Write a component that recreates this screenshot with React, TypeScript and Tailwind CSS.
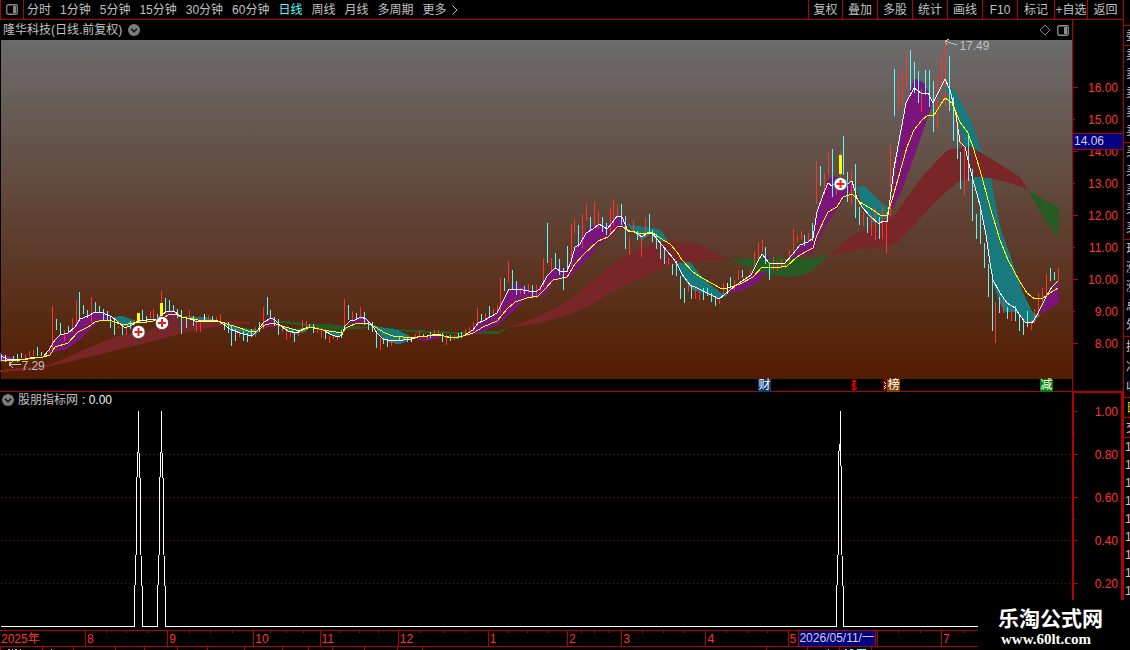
import React from "react";

type Candle = [number, number, number, "r" | "c" | "w"];

const periods = ["分时", "1分钟", "5分钟", "15分钟", "30分钟", "60分钟", "日线", "周线", "月线", "多周期", "更多"];

const tools: { label: string; width: string }[] = [
  { label: "复权", width: "w-[34px]" },
  { label: "叠加", width: "w-[35px]" },
  { label: "多股", width: "w-[35px]" },
  { label: "统计", width: "w-[35px]" },
  { label: "画线", width: "w-[35px]" },
  { label: "F10", width: "w-[35px]" },
  { label: "标记", width: "w-[37px]" },
  { label: "+自选", width: "w-[33px]" },
  { label: "返回", width: "w-[36px]" },
];

const prices = ["16.00", "15.00", "14.00", "13.00", "12.00", "11.00", "10.00", "9.00", "8.00"];
const levels = ["1.00", "0.80", "0.60", "0.40", "0.20"];

const months: { label: string; size: number; ticks: number }[] = [
  { label: "2025年", size: 86, ticks: 0 },
  { label: "8", size: 82, ticks: 3 },
  { label: "9", size: 86, ticks: 3 },
  { label: "10", size: 66, ticks: 3 },
  { label: "11", size: 78, ticks: 3 },
  { label: "12", size: 90, ticks: 3 },
  { label: "1", size: 79, ticks: 3 },
  { label: "2", size: 54, ticks: 3 },
  { label: "3", size: 84, ticks: 3 },
  { label: "4", size: 82, ticks: 3 },
  { label: "5", size: 89, ticks: 0 },
  { label: "", size: 64, ticks: 2 },
  { label: "7", size: 183, ticks: 7 },
];

const candles: Candle[] = [
  [1,354,360,"c"],[5,355,362,"w"],[9,357,364,"r"],[13,356,359,"c"],[17,354,362,"c"],[21,353,358,"c"],[25,354,359,"r"],[29,351,357,"r"],[33,350,356,"r"],[37,347,356,"c"],[41,352,356,"c"],[45,353,357,"r"],[49,348,352,"r"],
  [52,306,352,"r"],[56,319,330,"c"],[60,323,334,"c"],[64,330,341,"r"],[68,326,332,"c"],[72,318,332,"r"],[76,300,325,"r"],[79,292,320,"c"],[83,305,314,"c"],[87,310,318,"c"],[91,297,322,"r"],[95,302,313,"c"],[99,306,313,"c"],
  [103,309,320,"c"],[107,311,321,"c"],[110,316,328,"c"],[114,320,335,"c"],[118,326,328,"r"],[122,324,335,"c"],[126,326,335,"r"],[130,321,329,"c"],[134,320,325,"r"],[142,310,320,"c"],[146,316,322,"c"],[150,311,320,"r"],
  [153,309,319,"r"],[157,314,319,"c"],[161,291,303,"r"],[165,298,312,"c"],[169,300,311,"c"],[173,305,311,"c"],[177,309,318,"c"],[181,310,334,"c"],[186,318,328,"c"],[189,310,320,"r"],[193,316,326,"c"],[196,318,332,"r"],
  [200,320,332,"r"],[204,314,320,"w"],[208,315,321,"r"],[212,316,321,"c"],[216,317,322,"r"],[220,314,325,"r"],[224,322,330,"c"],[228,322,333,"c"],[231,326,346,"c"],[235,329,341,"c"],[239,329,337,"r"],[243,331,341,"c"],
  [247,333,342,"c"],[251,329,337,"c"],[255,327,337,"r"],[259,322,332,"c"],[263,307,329,"r"],[267,297,315,"c"],[270,310,319,"c"],[274,317,326,"c"],[278,319,335,"c"],[282,325,332,"r"],[286,330,340,"r"],[290,331,337,"r"],
  [294,332,342,"c"],[298,331,336,"r"],[302,320,332,"r"],[306,321,329,"r"],[309,324,328,"c"],[313,324,333,"c"],[317,327,333,"r"],[321,328,338,"r"],[325,331,339,"c"],[329,336,343,"r"],[333,335,339,"r"],[337,336,340,"r"],
  [341,330,338,"c"],[344,299,331,"r"],[348,305,320,"c"],[352,311,320,"r"],[356,313,320,"c"],[360,307,319,"r"],[364,312,325,"c"],[368,321,330,"c"],[372,322,332,"c"],[376,332,348,"c"],[380,338,350,"r"],[383,338,344,"c"],
  [387,339,347,"c"],[391,340,346,"r"],[395,341,344,"r"],[399,336,341,"c"],[403,336,341,"r"],[407,338,342,"c"],[411,338,342,"w"],[415,334,339,"r"],[419,331,338,"r"],[423,334,337,"c"],[427,335,340,"r"],[430,332,338,"c"],
  [434,330,336,"r"],[438,330,336,"r"],[442,333,342,"c"],[446,335,345,"r"],[450,335,341,"c"],[454,335,340,"r"],[458,333,338,"c"],[461,332,338,"c"],[465,329,334,"r"],[469,327,333,"r"],[473,322,331,"r"],[477,308,325,"r"],
  [481,314,321,"c"],[485,313,321,"r"],[489,306,317,"c"],[493,309,315,"r"],[497,305,313,"r"],[500,278,312,"r"],[504,278,291,"c"],[508,261,282,"r"],[512,270,290,"c"],[516,281,295,"c"],[520,288,294,"r"],[524,286,294,"c"],
  [528,284,293,"r"],[532,285,298,"c"],[536,285,298,"r"],[540,286,291,"r"],[543,258,287,"r"],[547,223,263,"c"],[551,258,272,"r"],[555,253,269,"c"],[559,259,275,"c"],[563,268,290,"c"],[567,246,272,"c"],[571,224,266,"r"],
  [574,219,233,"r"],[578,225,247,"c"],[582,214,248,"r"],[586,204,221,"r"],[590,217,230,"c"],[594,202,226,"r"],[598,211,229,"r"],[602,217,232,"c"],[606,223,235,"c"],[610,208,232,"r"],[613,199,226,"r"],[617,205,217,"r"],
  [621,204,225,"c"],[625,216,249,"c"],[629,237,255,"r"],[633,221,233,"r"],[637,231,240,"c"],[641,236,257,"r"],[645,218,237,"r"],[649,214,233,"c"],[652,230,242,"c"],[656,234,249,"c"],[660,244,259,"c"],[664,247,264,"c"],
  [668,258,265,"r"],[672,264,275,"c"],[676,261,276,"c"],[680,276,299,"c"],[684,288,303,"c"],[688,282,292,"r"],[691,286,299,"c"],[695,288,299,"r"],[699,292,300,"r"],[703,288,300,"c"],[707,288,296,"c"],[711,293,302,"c"],
  [715,296,306,"c"],[719,297,304,"r"],[723,283,294,"r"],[727,283,294,"w"],[730,277,288,"c"],[734,280,290,"r"],[738,270,280,"r"],[742,270,278,"c"],[746,276,281,"r"],[750,270,276,"r"],[754,251,266,"r"],[758,242,260,"r"],
  [762,240,252,"r"],[765,247,264,"c"],[769,263,280,"c"],[773,257,270,"r"],[777,262,271,"r"],[781,259,268,"r"],[785,259,268,"r"],[789,250,262,"r"],[793,229,251,"r"],[797,235,242,"r"],[801,231,240,"r"],[804,235,246,"c"],
  [808,233,242,"r"],[812,223,241,"c"],[816,161,204,"r"],[820,166,186,"c"],[824,173,195,"r"],[828,151,175,"r"],[832,149,197,"c"],[836,180,195,"r"],[840,150,185,"r"],[843,136,175,"c"],[847,172,202,"c"],[851,170,205,"r"],
  [855,164,218,"c"],[859,207,225,"c"],[863,212,226,"r"],[867,217,233,"c"],[871,215,236,"r"],[875,208,240,"r"],[879,217,239,"c"],[882,206,239,"r"],[886,213,254,"r"],[890,145,216,"r"],[894,69,116,"c"],[898,74,110,"r"],
  [902,70,106,"r"],[906,53,87,"r"],[910,50,90,"c"],[914,62,93,"c"],[918,71,103,"c"],[921,89,112,"r"],[925,70,95,"c"],[929,70,107,"c"],[933,81,132,"c"],[937,76,129,"r"],[941,54,95,"r"],[945,43,106,"r"],[949,56,111,"c"],
  [953,97,141,"c"],[957,128,159,"c"],[960,152,189,"c"],[964,148,195,"r"],[968,135,181,"c"],[972,169,221,"c"],[976,214,239,"c"],[980,207,244,"c"],[984,243,268,"c"],[988,264,297,"c"],[992,280,331,"c"],[995,302,343,"r"],
  [999,297,313,"c"],[1003,299,313,"r"],[1007,307,319,"c"],[1011,309,321,"r"],[1015,306,321,"c"],[1019,315,331,"c"],[1023,320,335,"c"],[1027,311,327,"c"],[1031,320,330,"r"],[1034,309,323,"r"],[1038,293,316,"r"],
  [1042,288,302,"r"],[1046,274,296,"r"],[1050,268,281,"c"],[1054,272,280,"c"],[1058,268,281,"r"],
];

const candleColor = { r: "#ff3232", c: "#54fcfc", w: "#ffffff" };

const fastLine =
  "1,356 7,359 20,360 30,358 43,357 49,350 55,340 60,335 68,333 75,327 80,319 88,316 95,312 103,313 112,317 117,321 125,328 132,325 138,321 147,320 157,319 163,314 168,311 174,311 182,317 190,319 198,322 207,321 218,321 223,324 230,329 240,333 252,336 258,330 264,322 271,318 275,320 282,327 288,331 297,333 303,329 310,327 315,328 323,330 332,335 338,337 342,335 345,326 350,321 355,320 361,317 366,319 372,325 377,333 383,339 392,341 403,340 412,339 418,337 427,336 438,334 447,337 453,338 463,336 473,330 478,323 483,321 490,317 497,313 501,305 505,297 509,289 515,289 523,290 535,292 540,289 547,276 555,268 562,272 567,271 571,262 575,247 580,244 586,233 593,229 599,224 607,229 612,223 617,216 622,217 628,231 635,232 642,237 647,233 652,233 657,239 662,245 667,251 673,258 677,264 682,274 690,285 697,288 707,293 715,297 719,299 725,294 735,286 742,281 751,275 757,263 762,254 769,263 785,263 792,255 800,245 808,242 813,238 817,212 823,195 828,183 832,186 840,177 847,184 852,181 857,198 862,207 870,216 879,224 883,221 887,222 890,200 894,168 901,130 906,103 914,88 921,93 928,93 933,103 941,87 945,79 950,90 956,115 960,142 965,147 968,160 973,180 980,205 986,235 990,263 993,280 1000,293 1007,303 1015,308 1021,317 1025,322 1032,323 1037,315 1047,295 1052,287 1058,281";

const slowLine =
  "1,361 20,360 43,357 50,355 55,347 68,343 78,332 88,327 95,322 103,320 112,321 123,325 133,323 147,322 160,320 168,315 174,314 182,317 198,320 218,321 227,324 237,327 248,331 257,331 265,325 273,323 282,326 292,329 300,331 310,327 323,330 342,333 346,328 357,323 367,323 375,327 385,333 393,336 403,337 417,337 440,335 453,338 463,336 473,333 483,327 497,321 507,309 515,302 527,298 538,296 545,289 553,280 567,277 575,264 583,255 598,241 608,237 617,227 621,226 630,231 642,234 652,232 660,238 670,244 677,252 682,260 693,272 702,278 713,284 720,288 728,288 740,284 753,277 762,267 775,268 787,266 797,257 805,252 813,248 817,235 828,212 837,207 843,197 852,194 860,202 873,210 880,215 887,215 892,200 900,172 907,147 914,130 922,120 928,115 934,115 945,98 952,103 960,122 968,133 973,147 980,170 990,207 1000,240 1008,260 1020,282 1027,293 1035,299 1043,298 1050,293 1058,288";

const RED = "#782628";
const GREEN = "#285a24";
const TEAL = "#187a7c";
const PURPLE = "#7b147b";

const bands: [string, string][] = [
  [TEAL, "933,103 942,88 948,85 956,92 972,123 982,152 991,180 1000,227 1013,263 1023,293 1033,313 1040,315 1033,324 1023,320 1015,312 1005,312 1000,303 993,283 986,233 972,177 965,147 957,115 950,98 945,88"],
  [RED, "0,370 50,365 83,350 120,335 150,330 173,318 200,320 250,322 250,324 227,324 187,332 150,342 113,351 77,360 33,370 0,372"],
  [GREEN, "267,321 287,321 310,324 330,324 343,326 377,327 410,330 440,331 460,332 498,331 508,328 498,334 460,334 420,333 370,328 343,330 320,329 290,324"],
  [RED, "507,328 540,316 570,300 597,277 623,257 650,245 667,240 680,243 697,244 713,253 728,260 707,260 677,263 653,273 620,288 590,305 570,314 540,323"],
  [GREEN, "728,260 752,258 773,257 793,258 813,258 829,255 813,270 803,275 790,277 773,275 757,271 743,265"],
  [RED, "829,255 853,235 877,225 893,217 922,177 947,150 970,146 993,160 1020,177 1028,190 1010,183 990,178 973,177 957,183 940,197 917,222 897,243 877,248 857,250"],
  [GREEN, "1028,190 1043,199 1059,207 1059,238 1045,220"],
  [PURPLE, "0,353 10,357 20,360 0,362"],
  [PURPLE, "46,356 50,350 57,339 68,333 80,319 92,312 105,312 112,320 97,322 87,332 78,341 67,349 55,352"],
  [TEAL, "112,317 123,316 133,320 138,323 130,326 123,326 117,322"],
  [PURPLE, "163,318 170,310 176,311 182,317 172,318"],
  [TEAL, "182,316 205,317 220,321 200,320"],
  [TEAL, "222,322 233,326 250,329 260,330 255,335 247,335 233,330"],
  [PURPLE, "260,330 267,320 273,317 278,323 282,327 270,327"],
  [TEAL, "282,327 297,329 312,326 305,332 295,334 288,332"],
  [TEAL, "323,329 342,332 340,337 330,335"],
  [PURPLE, "343,330 350,322 361,315 367,319 375,327 362,324 350,325"],
  [TEAL, "374,325 385,328 398,330 408,335 412,339 400,344 390,343 380,335"],
  [PURPLE, "412,338 440,336 440,338 424,341"],
  [TEAL, "448,337 463,336 458,339"],
  [PURPLE, "465,336 478,324 497,314 505,298 511,287 518,284 525,287 530,291 540,289 548,275 556,266 562,268 568,270 576,247 587,228 600,223 607,226 617,218 625,215 629,230 620,228 607,240 598,245 590,257 578,268 570,278 555,281 545,295 525,300 512,312 498,325 480,333"],
  [TEAL, "627,224 637,226 658,229 664,235 668,242 660,241 652,233 642,240 633,232"],
  [TEAL, "677,263 690,262 698,272 707,282 720,292 728,295 720,299 707,294 692,290 681,275"],
  [PURPLE, "728,294 735,285 750,275 767,271 757,283 743,290"],
  [PURPLE, "762,255 771,256 768,260"],
  [PURPLE, "790,258 802,245 812,238 818,207 828,180 833,176 845,180 853,185 848,195 838,208 827,223 813,252 800,257"],
  [TEAL, "857,187 864,186 878,200 889,208 887,217 873,223 862,207"],
  [PURPLE, "890,208 897,160 905,110 914,78 924,83 933,102 927,120 913,160 902,190 893,208"],
  [PURPLE, "1040,315 1047,295 1059,281 1059,303"],
];

const quoteGroups: { rows: string[]; size: string; tone: string }[] = [
  { rows: [""], size: "h-[26px] leading-[26px]", tone: "text-[#c8c8c8]" },
  { rows: ["委"], size: "h-[20px] leading-[20px]", tone: "text-[#c8c8c8]" },
  { rows: ["卖", "卖", "卖", "卖", "卖"], size: "h-[97px] leading-[19px]", tone: "text-[#c8c8c8]" },
  { rows: ["买", "买", "买", "买", "买"], size: "h-[97px] leading-[19px]", tone: "text-[#c8c8c8]" },
  { rows: ["现", "涨", "涨", "总", "外"], size: "h-[97px] leading-[19px]", tone: "text-[#c8c8c8]" },
  { rows: ["换", "净", "收"], size: "h-[61px] leading-[20px]", tone: "text-[#c8c8c8]" },
  { rows: ["日"], size: "h-[20px] leading-[20px]", tone: "text-[#d8d800]" },
  { rows: ["交"], size: "h-[20px] leading-[20px]", tone: "text-[#c8c8c8]" },
];

function CircleChevron({ label }: { label: string }) {
  return (
    <button type="button" aria-label={label} className="block h-3 w-3 shrink-0">
      <svg viewBox="0 0 12 12" className="block h-3 w-3">
        <circle cx="6" cy="6" r="6" fill="#7c7c7c" />
        <path d="M3 4.8 L6 7.8 L9 4.8" fill="none" stroke="#101010" strokeWidth="1.5" />
      </svg>
    </button>
  );
}

function PanelIcon({ tone }: { tone: string }) {
  return (
    <svg viewBox="0 0 12 11" className="block h-[11px] w-3">
      <rect x="0.75" y="0.75" width="10.5" height="9.5" rx="1.5" fill="none" stroke={tone} strokeWidth="1.3" />
      <rect x="7" y="2" width="3" height="7" fill={tone} />
    </svg>
  );
}

function Signal({ x, y }: { x: number; y: number }) {
  return (
    <g>
      <circle cx={x} cy={y} r="6.6" fill="#ffffff" stroke="#3a3a3a" strokeWidth="0.8" />
      <path d={`M${x - 4} ${y}H${x + 4}M${x} ${y - 4}V${y + 4}`} stroke="#f01818" strokeWidth="2" />
    </g>
  );
}

function TopBar() {
  return (
    <header className="flex h-5 items-stretch border-b border-[#b40000]">
      <button type="button" aria-label="面板" className="flex w-6 items-center justify-center border-x border-[#b40000]">
        <PanelIcon tone="#888888" />
      </button>
      <nav className="flex flex-1 items-center gap-[9px] pl-[3px]">
        {periods.map((p) => (
          <button key={p} type="button" className={p === "日线" ? "whitespace-nowrap text-[#54fcfc]" : "whitespace-nowrap"}>
            {p}
          </button>
        ))}
        <svg viewBox="0 0 6 10" className="-ml-1 h-[10px] w-[6px]">
          <path d="M0.5 0.5 L5 5 L0.5 9.5" fill="none" stroke="#c0c0c0" />
        </svg>
      </nav>
      <div className="flex">
        {tools.map((t) => (
          <button key={t.label} type="button" className={`${t.width} whitespace-nowrap border-l border-[#b40000] text-center`}>
            {t.label}
          </button>
        ))}
      </div>
    </header>
  );
}

function PriceChart() {
  return (
    <div className="relative h-[339px]">
      <svg viewBox="0 40 1072 339" preserveAspectRatio="none" className="block h-full w-full overflow-visible">
        <defs>
          <linearGradient id="sky" x1="0" y1="0" x2="0" y2="1">
            <stop offset="0" stopColor="#6c6c6c" />
            <stop offset="1" stopColor="#541c00" />
          </linearGradient>
        </defs>
        <rect x="1" y="40" width="1071" height="339" fill="url(#sky)" />
        <g shapeRendering="crispEdges">
          {bands.map(([fill, points]) => (
            <polygon key={points} points={points} fill={fill} />
          ))}
          {candles.map(([x, top, bottom, kind]) => (
            <rect key={x} x={x} y={top} width="1" height={bottom - top} fill={candleColor[kind]} />
          ))}
          <rect x="137" y="313" width="3" height="10" fill="#ffff00" />
          <rect x="160" y="303" width="3" height="13" fill="#ffff00" />
          <rect x="839" y="155" width="3" height="19" fill="#ffff00" />
          <polyline points={fastLine} fill="none" stroke="#ffffff" />
          <polyline points={slowLine} fill="none" stroke="#ffff00" />
          <path d="M9 364.5H21M9 364.5L13 361M9 364.5L13 368" fill="none" stroke="#c0c0c0" />
          <path d="M945 41L957 45M945 41L949 39M945 41L947 45" fill="none" stroke="#c0c0c0" />
        </g>
        <Signal x={138.5} y={332} />
        <Signal x={162} y={323} />
        <Signal x={840.5} y={184} />
      </svg>
      <span className="absolute bottom-[5px] left-[2%] leading-4">7.29</span>
      <span className="absolute left-[89.5%] top-[-2px] leading-4">17.49</span>
    </div>
  );
}

function EventRow() {
  return (
    <div className="relative h-3 leading-[12px] text-white">
      <span className="absolute left-[70.7%] top-0 h-[13px] w-[13px] bg-[#0c3c70] text-center">财</span>
      <svg viewBox="0 0 8 12" className="absolute left-[79.3%] top-0 h-3 w-2">
        <path d="M4 0L6.5 3H1.5Z" fill="#ff0000" />
        <path d="M6.5 5.5C5.5 4 2 4.2 2 6C2 8 6.3 7 6.3 9C6.3 11 2.5 11 1.5 9.5M4 3.5V11.5" fill="none" stroke="#ff0000" strokeWidth="1.2" />
      </svg>
      <div className="absolute left-[82.4%] top-0 flex h-[13px]">
        <svg viewBox="0 0 4 13" className="h-[13px] w-1 bg-[#800000]">
          <path d="M1 3L3 5M3 6L1 8M1 10L3 8" fill="none" stroke="#ffffff" />
        </svg>
        <span className="w-[13px] bg-[#804000] text-center">榜</span>
      </div>
      <span className="absolute left-[97%] top-0 h-[13px] w-[13px] bg-[#008000] text-center">减</span>
    </div>
  );
}

function PriceAxis() {
  return (
    <div className="relative flex w-[51px] border-l border-[#b40000] text-[#ff3232]">
      <svg viewBox="0 0 6 371" className="h-[371px] w-[6px] shrink-0" shapeRendering="crispEdges">
        {prices.map((p, i) => (
          <rect key={p} x="0" y={67 + i * 32} width={i % 2 ? 2 : 5} height="1" fill="#b40000" />
        ))}
      </svg>
      <div className="flex flex-1 flex-col pr-[5px] pt-[52px] text-right">
        {prices.map((p) => (
          <span key={p} className="h-8 leading-8">{p}</span>
        ))}
      </div>
      <span className="absolute inset-x-0 top-[113px] h-[17px] border-y border-[#b40000] bg-[#000080] pl-px leading-[15px] text-[#d0d0d0]">14.06</span>
    </div>
  );
}

function IndicatorPane() {
  return (
    <section className="flex h-[238px]">
      <div className="min-w-0 flex-1">
        <div className="flex h-4 items-center gap-1 pl-[2px]">
          <CircleChevron label="指标菜单" />
          <span>股朋指标网</span>
          <span className="text-[#f0f0f0]">: 0.00</span>
        </div>
        <svg viewBox="0 408 1072 222" preserveAspectRatio="none" className="block h-[222px] w-full" shapeRendering="crispEdges">
          {[454.5, 497.5, 540.5, 583.5].map((y) => (
            <path key={y} d={`M1 ${y}H1072`} stroke="#7a1010" strokeDasharray="1 3" />
          ))}
          <path
            d="M1 626.5H134.5V601L136.5 540V490L138.5 440V411V440L140.5 490V540L142.5 601V626.5H157.5V601L159.5 540V490L161.5 440V411V440L163.5 490V540L165.5 601V626.5H836.5V601L838.5 540V455L840.5 440V411V440L841.5 490V540L843.5 601V626.5H1072"
            fill="none"
            stroke="#ffffff"
          />
        </svg>
      </div>
      <div className="flex w-[51px] border-x-2 border-t border-[#b40000] text-[#ff3232]">
        <svg viewBox="0 0 5 237" className="h-[237px] w-[5px] shrink-0" shapeRendering="crispEdges">
          {levels.map((l, i) => (
            <g key={l} fill="#b40000">
              <rect x="0" y={18 + i * 43} width="4" height="1" />
              <rect x="0" y={40 + i * 43} width="1" height="1" />
            </g>
          ))}
        </svg>
        <div className="flex flex-1 flex-col pr-[3px] pt-2 text-right">
          {levels.map((l) => (
            <span key={l} className="h-[43px] leading-[22px]">{l}</span>
          ))}
        </div>
      </div>
    </section>
  );
}

function TimeAxis() {
  return (
    <div className="relative flex h-[17px] border-y border-[#b40000] text-[#ff3232]">
      {months.map((m, i) => (
        <div
          key={i}
          className={i === 0 ? "min-w-0 basis-0" : "min-w-0 basis-0 border-l border-[#b40000]"}
          style={{ flexGrow: m.size }}
        >
          <div className="flex h-[2px] justify-evenly">
            {Array.from({ length: m.ticks }, (_, k) => (
              <i key={k} className="w-px bg-[#b40000]" />
            ))}
          </div>
          <span className="block pl-px leading-[13px]">{m.label}</span>
        </div>
      ))}
      <span className="absolute inset-y-0 left-[71.1%] w-[78px] whitespace-nowrap border-x border-[#b40000] bg-[#000080] leading-[15px] text-[#d0d0d0]">
        2026/05/11/一
      </span>
    </div>
  );
}

function FooterRuler() {
  const ticks = [0, 42, 73, 115, 144, 177, 207, 244, 282, 308, 332, 364, 397, 422, 766, 807, 839, 871];
  return (
    <svg viewBox="0 0 1123 3" preserveAspectRatio="none" className="block h-[3px] w-full" shapeRendering="crispEdges">
      {ticks.map((x) => (
        <rect key={x} x={x} y="0" width="1" height="3" fill="#b40000" />
      ))}
      <path d="M8 2.5h2M12 2.5h1M15 2.5h2M20 2.5h1M51 2.5h1M828 2.5h1M845 2.5h2" stroke="#c0c0c0" />
      <path d="M850 2.5h3M857 2.5h9" stroke="#54fcfc" />
    </svg>
  );
}

function QuoteStrip() {
  return (
    <aside className="w-[7px] shrink-0 overflow-hidden whitespace-nowrap border-l border-[#b40000]">
      {quoteGroups.map((g, i) => (
        <div key={i} className={`${g.size} ${g.tone} overflow-hidden border-b border-[#b40000] pl-[2px]`}>
          {g.rows.map((r, k) => (
            <div key={k}>{r}</div>
          ))}
        </div>
      ))}
      <div className="pl-px leading-[18px] text-[#c8c8c8]">
        {Array.from({ length: 9 }, (_, k) => (
          <div key={k}>1</div>
        ))}
      </div>
    </aside>
  );
}

export default function App() {
  return (
    <div className="relative flex min-h-screen bg-black font-['Liberation_Sans','Noto_Sans_CJK_SC',sans-serif] text-xs text-[#c0c0c0]">
      <main className="flex min-w-0 flex-1 flex-col">
        <TopBar />
        <section className="flex border-b border-[#b40000]">
          <div className="min-w-0 flex-1">
            <div className="flex h-5 items-center justify-between pl-[3px] pr-[3px]">
              <div className="flex items-center gap-[6px]">
                <h1>隆华科技(日线.前复权)</h1>
                <CircleChevron label="股票菜单" />
              </div>
              <div className="flex items-center gap-[6px]">
                <svg viewBox="0 0 12 12" className="h-3 w-3">
                  <path d="M6 1L11 6L6 11L1 6Z" fill="none" stroke="#808080" />
                </svg>
                <PanelIcon tone="#909090" />
              </div>
            </div>
            <PriceChart />
            <EventRow />
          </div>
          <PriceAxis />
        </section>
        <IndicatorPane />
        <TimeAxis />
        <FooterRuler />
      </main>
      <QuoteStrip />
      <div className="absolute bottom-0 right-0 flex h-[50px] w-[152px] flex-col bg-black pl-5 pt-2 text-white">
        <span className="text-[21px] font-bold leading-[22px]">乐淘公式网</span>
        <span className="pl-[3px] font-['Liberation_Serif',serif] text-[15px] font-bold leading-[18px]">www.60lt.com</span>
      </div>
    </div>
  );
}
